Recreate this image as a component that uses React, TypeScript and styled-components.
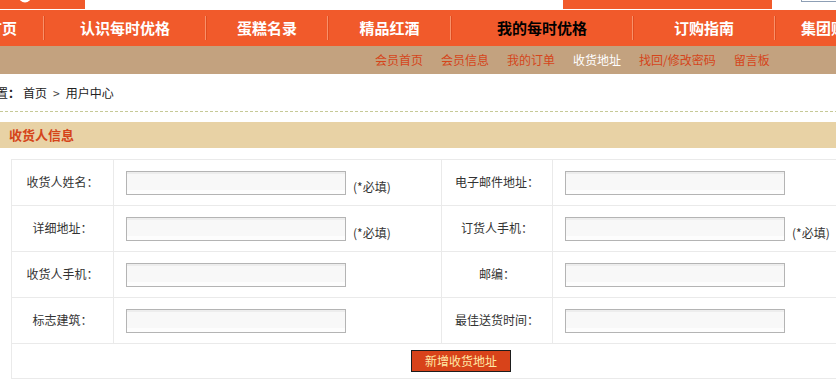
import styled, { createGlobalStyle } from 'styled-components';

const GlobalStyle = createGlobalStyle`
  html, body {
    margin: 0;
    padding: 0;
    overflow: hidden;
    background: #fff;
  }
  body {
    font-family: "Noto Sans CJK SC", "Noto Sans", sans-serif;
    font-size: 12px;
    color: #333;
  }
`;

const navItems = [
  { label: '首页', width: 82 },
  { label: '认识每时优格', width: 160 },
  { label: '蛋糕名录', width: 120 },
  { label: '精品红酒', width: 121 },
  { label: '我的每时优格', width: 180, active: true },
  { label: '订购指南', width: 140 },
  { label: '集团购买', width: 110 },
];

const subLinks = [
  { label: '会员首页' },
  { label: '会员信息' },
  { label: '我的订单' },
  { label: '收货地址', active: true },
  { label: '找回/修改密码' },
  { label: '留言板' },
];

type Field = { label: string; required?: boolean };

const rows: Field[][] = [
  [{ label: '收货人姓名：', required: true }, { label: '电子邮件地址：' }],
  [{ label: '详细地址：', required: true }, { label: '订货人手机：', required: true }],
  [{ label: '收货人手机：' }, { label: '邮编：' }],
  [{ label: '标志建筑：' }, { label: '最佳送货时间：' }],
];

export default function App() {
  return (
    <>
      <GlobalStyle />
      <St.Page>
        <St.TopStrip>
          <St.LogoTab>
            <svg width="85" height="9" viewBox="0 0 85 9">
              <ellipse cx="25" cy="-4" rx="6.5" ry="6.5" fill="#fff" />
            </svg>
          </St.LogoTab>
          <St.Banner />
          <St.SearchBox />
        </St.TopStrip>

        <St.Nav>
          {navItems.map((item, i) => (
            <St.NavGroup key={item.label}>
              {i > 0 && <St.NavDivider />}
              <St.NavItem $w={item.width} $active={!!item.active}>
                {item.label}
              </St.NavItem>
            </St.NavGroup>
          ))}
        </St.Nav>

        <St.SubNav>
          {subLinks.map((link) => (
            <St.SubLink key={link.label} $active={!!link.active}>
              {link.label}
            </St.SubLink>
          ))}
        </St.SubNav>

        <St.Crumb>
          <St.CrumbLabel>您的位置<b>：</b></St.CrumbLabel>
          <St.CrumbLink>首页</St.CrumbLink>
          <St.CrumbSep>&gt;</St.CrumbSep>
          <span>用户中心</span>
        </St.Crumb>
        <St.DashRule />

        <St.SectionTitle>收货人信息</St.SectionTitle>

        <St.FormGrid>
          {rows.map((row) =>
            row.map((field) => (
              <St.CellPair key={field.label}>
                <St.LabelCell>{field.label}</St.LabelCell>
                <St.FieldCell>
                  <St.TextInput type="text" />
                  {field.required && <St.Note>(*必填)</St.Note>}
                </St.FieldCell>
              </St.CellPair>
            ))
          )}
          <St.ButtonRow>
            <St.SubmitButton type="button">新增收货地址</St.SubmitButton>
          </St.ButtonRow>
        </St.FormGrid>
      </St.Page>
    </>
  );
}

const St = {
  Page: styled.div`
    width: 836px;
    height: 387px;
    overflow: hidden;
  `,
  TopStrip: styled.div`
    display: flex;
    align-items: flex-start;
    height: 10px;

    & > * {
      flex-shrink: 0;
    }
  `,
  LogoTab: styled.div`
    width: 85px;
    height: 9px;
    background: #f15a2b;
    overflow: hidden;

    svg {
      display: block;
    }
  `,
  Banner: styled.div`
    width: 209px;
    height: 9px;
    margin-left: 478px;
    background: #f15a2b;
  `,
  SearchBox: styled.div`
    width: 60px;
    height: 1px;
    margin-left: 29px;
    border: 1px solid #8d9fb5;
    border-top: none;
  `,
  Nav: styled.div`
    display: flex;
    align-items: center;
    height: 36px;
    margin-left: -39px;
    background: #f15a2b;
  `,
  NavGroup: styled.div`
    display: flex;
    align-items: center;
    flex-shrink: 0;
  `,
  NavDivider: styled.span`
    width: 1px;
    height: 24px;
    background: #f8916b;
    border-right: 1px solid #df4c1f;
  `,
  NavItem: styled.div<{ $w: number; $active: boolean }>`
    width: ${({ $w }) => $w}px;
    text-align: center;
    line-height: 36px;
    font-size: 15px;
    font-weight: 700;
    color: ${({ $active }) => ($active ? '#000' : '#fff')};
    white-space: nowrap;
    overflow: hidden;
  `,
  SubNav: styled.div`
    display: flex;
    align-items: center;
    height: 28px;
    padding-left: 366px;
    background: #c3a27f;
  `,
  SubLink: styled.a<{ $active: boolean }>`
    padding: 0 9px;
    line-height: 28px;
    font-size: 12px;
    color: ${({ $active }) => ($active ? '#fff' : '#d5451b')};
    text-decoration: none;
    white-space: nowrap;
  `,
  Crumb: styled.div`
    height: 37px;
    line-height: 37px;
    margin-left: -40px;
    font-size: 12px;
    color: #222;
    white-space: nowrap;
  `,
  CrumbLabel: styled.span`
    b {
      font-weight: 700;
    }
  `,
  CrumbLink: styled.span`
    margin-left: 3px;
  `,
  CrumbSep: styled.span`
    margin: 0 6px;
    color: #444;
  `,
  DashRule: styled.div`
    height: 1px;
    background: repeating-linear-gradient(to right, #c6c997 0 3px, transparent 3px 5px);
  `,
  SectionTitle: styled.div`
    height: 26px;
    margin-top: 10px;
    padding-left: 9px;
    line-height: 26px;
    background: #e8d2a5;
    color: #d5441a;
    font-size: 13px;
    font-weight: 700;
  `,
  FormGrid: styled.div`
    display: grid;
    grid-template-columns: 102px 328px 111px 358px;
    grid-template-rows: repeat(4, 46px) 35px;
    width: max-content;
    margin: 11px 0 0 11px;
    border-left: 1px solid #eaeaea;
    border-top: 1px solid #eaeaea;
  `,
  CellPair: styled.div`
    display: contents;
  `,
  LabelCell: styled.div`
    display: flex;
    align-items: center;
    justify-content: center;
    padding-bottom: 2px;
    border-right: 1px solid #eaeaea;
    border-bottom: 1px solid #eaeaea;
    font-size: 12px;
    color: #333;
    white-space: nowrap;
  `,
  FieldCell: styled.div`
    display: flex;
    align-items: center;
    padding-left: 12px;
    border-right: 1px solid #eaeaea;
    border-bottom: 1px solid #eaeaea;
  `,
  TextInput: styled.input`
    box-sizing: border-box;
    width: 220px;
    height: 24px;
    margin: 0;
    padding: 0 4px;
    border: 1px solid #b4b4b4;
    background: linear-gradient(to bottom, #ededed 0 2px, #f8f8f8 2px 18px, #fdfdfd 18px);
    outline: none;
  `,
  Note: styled.span`
    align-self: flex-end;
    margin: 0 0 11px 7px;
    line-height: 14px;
    font-size: 12px;
    color: #333;
    white-space: nowrap;
  `,
  ButtonRow: styled.div`
    grid-column: 1 / -1;
    display: flex;
    align-items: center;
    justify-content: center;
    border-right: 1px solid #eaeaea;
    border-bottom: 1px solid #eaeaea;
  `,
  SubmitButton: styled.button`
    width: 100px;
    height: 22px;
    padding: 0;
    border: 1px solid #1d1d1d;
    background: #d8431a;
    color: #ffe9a6;
    font-family: inherit;
    font-size: 12px;
    line-height: 20px;
    cursor: pointer;
  `,
};
